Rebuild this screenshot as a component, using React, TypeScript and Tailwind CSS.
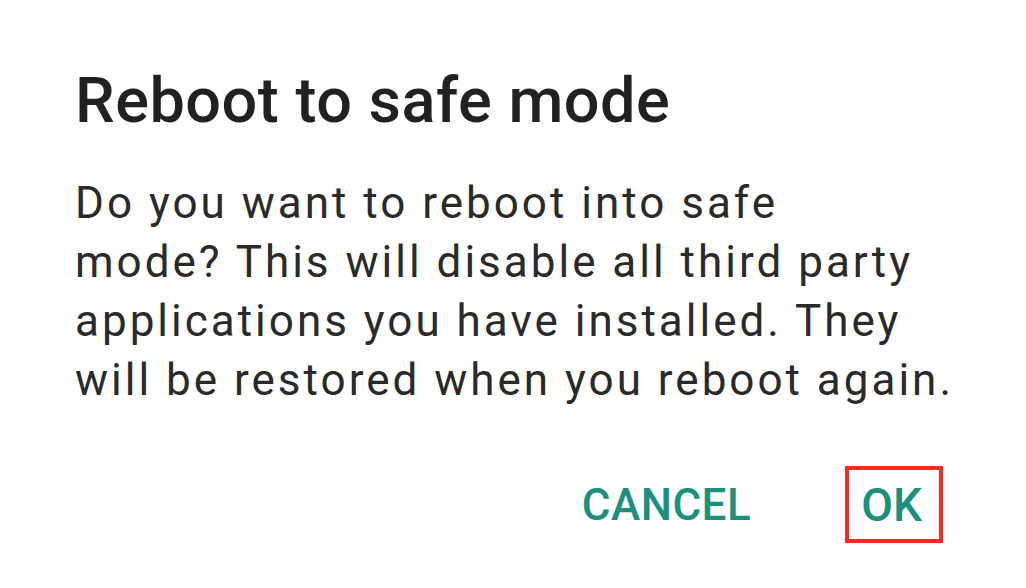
export default function App() {
  return (
    <div className="min-h-[588px] w-full bg-white font-['Roboto',sans-serif] antialiased">
      <div className="pl-[75px] pr-[40px] pt-[69px]">
        <h1 className="text-[63px] font-medium leading-[63px] tracking-[0.5px] text-[#212121]">Reboot to safe mode</h1>
        <p className="mt-[42px] text-[44px] leading-[59px] tracking-[3px] text-[#2a2a2a]">
          Do you want to reboot into safe
          <br />
          mode? This will disable all third party
          <br />
          applications you have installed. They
          <br />
          will be restored when you reboot again.
        </p>
      </div>
      <div className="mt-[56px] flex items-center justify-end gap-[94px] pr-[83px]">
        <button className="text-[44px] font-medium leading-[46px] tracking-[0.5px] text-[#1a907d]">CANCEL</button>
        <button className="border-4 border-[#ff2a1f] pb-[11px] pl-[12px] pr-[17px] pt-[12px] text-[46px] font-medium leading-[46px] text-[#1a907d]">
          OK
        </button>
      </div>
    </div>
  )
}
